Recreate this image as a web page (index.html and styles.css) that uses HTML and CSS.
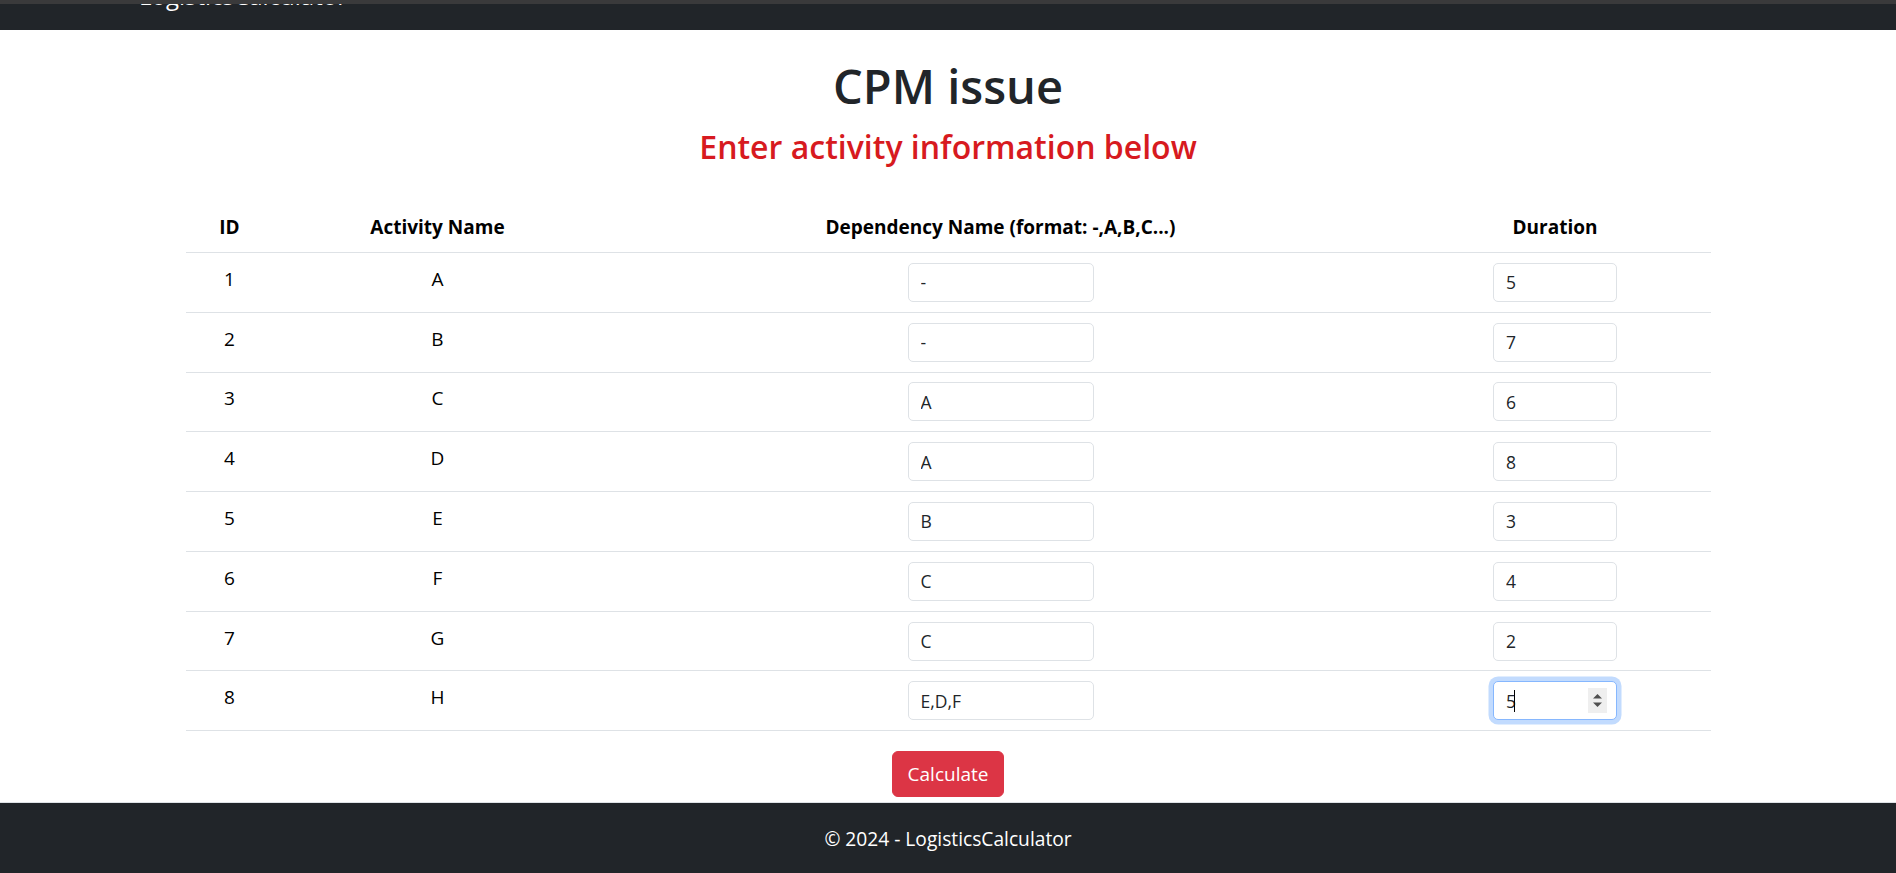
FILE: index.html
```html
<!DOCTYPE html>
<html lang="en">
<head>
<meta charset="utf-8">
<title>CPM issue - LogisticsCalculator</title>
<link rel="stylesheet" href="styles.css">
</head>
<body>
<header class="topbar">
  <div class="brand">LogisticsCalculator</div>
</header>
<main class="main">
  <h1 class="title">CPM issue</h1>
  <h4 class="subtitle">Enter activity information below</h4>
  <table class="cpm-table">
    <colgroup>
      <col class="c-id"><col class="c-name"><col class="c-dep"><col class="c-dur">
    </colgroup>
    <thead>
      <tr><th>ID</th><th>Activity Name</th><th>Dependency Name (format: -,A,B,C...)</th><th>Duration</th></tr>
    </thead>
    <tbody>
      <tr><td>1</td><td>A</td><td><input class="field dep" type="text" value="-"></td><td><input class="field dur" type="text" value="5"></td></tr>
      <tr><td>2</td><td>B</td><td><input class="field dep" type="text" value="-"></td><td><input class="field dur" type="text" value="7"></td></tr>
      <tr><td>3</td><td>C</td><td><input class="field dep" type="text" value="A"></td><td><input class="field dur" type="text" value="6"></td></tr>
      <tr><td>4</td><td>D</td><td><input class="field dep" type="text" value="A"></td><td><input class="field dur" type="text" value="8"></td></tr>
      <tr><td>5</td><td>E</td><td><input class="field dep" type="text" value="B"></td><td><input class="field dur" type="text" value="3"></td></tr>
      <tr><td>6</td><td>F</td><td><input class="field dep" type="text" value="C"></td><td><input class="field dur" type="text" value="4"></td></tr>
      <tr><td>7</td><td>G</td><td><input class="field dep" type="text" value="C"></td><td><input class="field dur" type="text" value="2"></td></tr>
      <tr><td>8</td><td>H</td><td><input class="field dep" type="text" value="E,D,F"></td><td>
        <span class="focus-wrap">
          <input class="field dur focused" type="text" value="5">
          <span class="caret"></span>
          <span class="spinner">
            <svg width="19" height="25" viewBox="0 0 19 25"><path d="M5 10.5 L9.5 6 L14 10.5 Z" fill="#505050"/><path d="M5 14.5 L9.5 19 L14 14.5 Z" fill="#505050"/></svg>
          </span>
        </span>
      </td></tr>
    </tbody>
  </table>
  <div class="actions">
    <button class="btn-calc" type="button">Calculate</button>
  </div>
</main>
<footer class="footer">
  <span>© 2024 - LogisticsCalculator</span>
</footer>
</body>
</html>
```

FILE: styles.css
```css
* { box-sizing: border-box; }
html, body { margin: 0; padding: 0; }
body {
  font-family: "Open Sans", "Noto Sans", sans-serif;
  color: #212529;
  background: #fff;
  height: 100vh;
  display: flex;
  flex-direction: column;
  overflow: hidden;
}
.topbar {
  height: 30px;
  flex: none;
  background: #212529;
  border-top: 4px solid #3a3a3b;
  overflow: hidden;
  padding-left: 139px;
}
.brand {
  font-size: 24px;
  line-height: 24px;
  color: #fff;
  margin-top: -20px;
}
.main {
  flex: 1;
  display: flex;
  flex-direction: column;
  align-items: center;
}
.title {
  margin: 28px 0 0;
  font-size: 47px;
  font-weight: 560;
  line-height: 56px;
  color: #212529;
}
.subtitle {
  margin: 14px 0 0;
  font-size: 32px;
  font-weight: 600;
  line-height: 1.2;
  color: #d71a20;
}
.cpm-table {
  margin-top: 37px;
  width: 1525px;
  border-collapse: collapse;
  table-layout: fixed;
  font-size: 19px;
  color: #000;
}
.c-id { width: 88px; }
.c-name { width: 328px; }
.c-dep { width: 798px; }
.c-dur { width: 311px; }
.cpm-table th, .cpm-table td {
  text-align: center;
  vertical-align: top;
  padding: 9.9px 9.6px;
  line-height: 28.8px;
  border-bottom: 1px solid #dee2e6;
}
.cpm-table td { line-height: 33px; }
.cpm-table th { font-weight: 700; }
.field {
  display: inline-block;
  vertical-align: top;
  height: 39px;
  padding: 0 12px;
  border: 1px solid #dee2e6;
  border-radius: 5px;
  font-family: inherit;
  font-size: 17.5px;
  color: #212529;
  background: #fff;
  outline: none;
}
.dep { width: 186px; }
.dur { width: 124px; }
.focus-wrap {
  position: relative;
  display: inline-block;
  vertical-align: top;
}
.focused {
  border-color: #86b7fe;
  box-shadow: 0 0 0 4.5px rgba(13, 110, 253, 0.25);
}
.caret {
  position: absolute;
  left: 21px;
  top: 9px;
  width: 1px;
  height: 22px;
  background: #000;
}
.spinner {
  position: absolute;
  right: 10px;
  top: 7px;
  width: 19px;
  height: 25px;
  background: #efefef;
  display: flex;
}
.actions {
  margin-top: 20px;
}
.btn-calc {
  height: 46px;
  padding: 0 15px;
  border: 1px solid #dc3545;
  border-radius: 6px;
  background: #dc3545;
  color: #fff;
  font-family: inherit;
  font-size: 19px;
  line-height: 1.5;
}
.footer {
  flex: none;
  height: 71px;
  background: #212529;
  border-top: 1px solid #dee2e6;
  color: #fff;
  font-size: 19.2px;
  display: flex;
  align-items: center;
  justify-content: center;
}
```
